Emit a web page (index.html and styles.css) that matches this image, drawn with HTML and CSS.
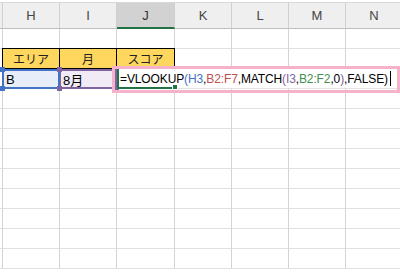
FILE: index.html
```html
<!DOCTYPE html>
<html lang="ja">

<head>
    <meta charset="UTF-8">
    <meta name="viewport" content="width=device-width, initial-scale=1.0">
    <link rel="stylesheet" href="styles.css">
    <title>VLOOKUP MATCH</title>
</head>

<body>

    <div class="sheet">
        <div class="col-head edge"></div>
        <div class="col-head">H</div>
        <div class="col-head">I</div>
        <div class="col-head active">J</div>
        <div class="col-head">K</div>
        <div class="col-head">L</div>
        <div class="col-head">M</div>
        <div class="col-head">N</div>

        <div class="cell edge"></div>
        <div class="cell"></div>
        <div class="cell"></div>
        <div class="cell"></div>
        <div class="cell"></div>
        <div class="cell"></div>
        <div class="cell"></div>
        <div class="cell"></div>

        <div class="cell edge"></div>
        <div class="cell label first">エリア</div>
        <div class="cell label">月</div>
        <div class="cell label">スコア</div>
        <div class="cell"></div>
        <div class="cell"></div>
        <div class="cell"></div>
        <div class="cell"></div>

        <div class="cell edge"></div>
        <div class="cell ref ref-blue">B<i class="h tl"></i><i class="h tr"></i><i class="h bl"></i><i class="h br"></i></div>
        <div class="cell ref ref-purple">8月<i class="h tl"></i><i class="h tr"></i><i class="h bl"></i><i class="h br"></i></div>
        <div class="editor">
            <div class="edit-cell"><i class="fill"></i></div>
            <div class="formula">=VLOOKUP<span class="c-blue">(H3</span>,<span class="c-red">B2:F7</span>,MATCH<span class="c-purple">(I3</span>,<span class="c-green">B2:F2</span>,0<span class="c-purple">)</span>,FALSE)<span class="caret"></span></div>
            <div class="frame"></div>
        </div>
    </div>
    <script>
        // empty rows below the table
        const sheet = document.querySelector('.sheet');
        for (let r = 0; r < 9; r++) {
            for (let c = 0; c < 8; c++) {
                const cell = document.createElement('div');
                cell.className = c == 0 ? 'cell edge' : 'cell';
                sheet.appendChild(cell);
            }
        }
    </script>
</body>

</html>
```

FILE: styles.css
```css
body {
    margin: 0;
    background-color: #ffffff;
    font-family: 'Noto Sans CJK JP', 'Noto Sans', sans-serif;
    height: 275px;
    overflow: hidden;
}

.sheet {
    display: grid;
    grid-template-columns: 3px 57px 57px 58px 57px 57px 57px 57px;
    grid-template-rows: 27px repeat(12, 20px);
    padding-top: 2px;
}

.col-head {
    background-color: #efefef;
    border-top: 1px solid #d8d8d8;
    border-right: 1px solid #d0d0d0;
    border-bottom: 1px solid #bdbdbd;
    color: #444444;
    font-family: 'Liberation Sans', sans-serif;
    font-size: 13px;
    display: flex;
    justify-content: center;
    align-items: center;
}

.col-head.active {
    background-color: #d2d2d2;
    border-bottom: 2px solid #217346;
    color: #333333;
}

.cell {
    border-right: 1px solid #d4d4d4;
    border-bottom: 1px solid #e1e1e1;
    font-size: 12px;
    color: #000000;
    display: flex;
    align-items: center;
}

.cell.label {
    background-color: #ffd75e;
    border-top: 1px solid #000000;
    border-right: 1px solid #000000;
    border-bottom: 1px solid #000000;
    justify-content: center;
    margin-top: -1px;
    color: #222222;
}

.cell.label.first {
    border-left: 1px solid #000000;
    margin-left: -1px;
}

.cell.ref {
    position: relative;
    padding-left: 2px;
    font-family: 'Liberation Sans', 'Noto Sans CJK JP', sans-serif;
    font-size: 13px;
    color: #000000;
}

.ref-blue {
    background-color: #e8eef9;
    border: 2px solid #4472c4;
    margin-left: -1px;
}

.ref-blue .h {
    background-color: #4472c4;
}

.ref-purple {
    background-color: #f1ebf6;
    border: 2px solid #8064a2;
    border-left-width: 1px;
}

.ref-purple .h {
    background-color: #8064a2;
}

.h {
    position: absolute;
    width: 5px;
    height: 5px;
}

.h.tl { left: -4px; top: -4px; }
.h.tr { right: -4px; top: -4px; }
.h.bl { left: -4px; bottom: -4px; }
.h.br { right: -4px; bottom: -4px; }

.editor {
    grid-column: 4 / 9;
    position: relative;
    background-color: #ffffff;
    border-bottom: 1px solid #e1e1e1;
    display: flex;
    align-items: center;
}

.edit-cell {
    position: absolute;
    left: 0;
    top: 0;
    width: 56px;
    height: 18px;
    border-left: 2px solid #217346;
    border-bottom: 2px solid #217346;
}

.edit-cell .fill {
    position: absolute;
    right: -3px;
    bottom: -3px;
    width: 4px;
    height: 4px;
    background-color: #217346;
    border: 1px solid #ffffff;
}

.formula {
    font-family: 'Liberation Sans', sans-serif;
    font-size: 12px;
    letter-spacing: -0.12px;
    color: #000000;
    padding-left: 3px;
    white-space: nowrap;
    display: flex;
    align-items: center;
}

.c-blue { color: #4472c4; }
.c-red { color: #c0504d; }
.c-purple { color: #8064a2; }
.c-green { color: #3f8f4f; }

.caret {
    display: inline-block;
    width: 1px;
    height: 15px;
    margin-left: 2px;
    background-color: #000000;
}

.frame {
    position: absolute;
    left: -5px;
    right: 3px;
    top: -3px;
    bottom: -5px;
    border: 3px solid #f4b3cb;
    pointer-events: none;
}
```
